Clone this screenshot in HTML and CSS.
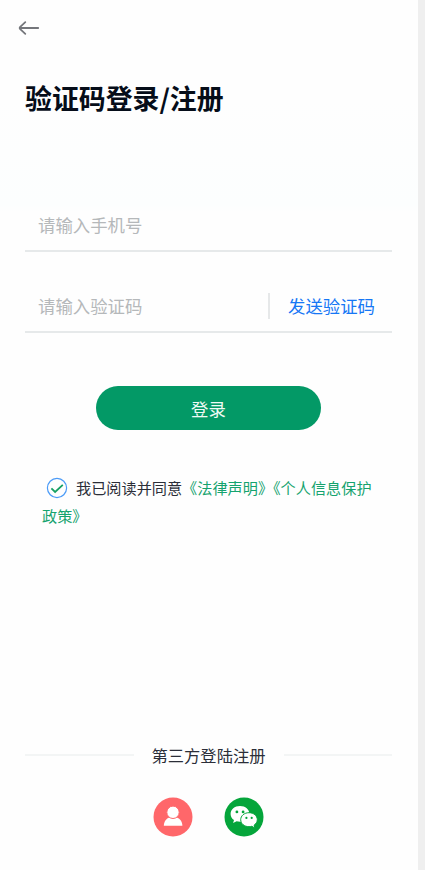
FILE: index.html
```html
<!DOCTYPE html>
<html lang="zh-CN">
<head>
<meta charset="utf-8">
<meta name="viewport" content="width=device-width, initial-scale=1">
<title>验证码登录/注册</title>
<link rel="stylesheet" href="styles.css">
</head>
<body>
<main class="page">
  <header class="topbar">
    <svg class="back" viewBox="0 0 22 16" aria-hidden="true"><path d="M20.200 8H2M7.300 2.200L2 7Q1.200 8 2 9L7.300 13.800"/></svg>
  </header>
  <h1 class="title">验证码登录/注册</h1>
  <form class="form">
    <div class="field"><span class="placeholder">请输入手机号</span></div>
    <div class="field field-code">
      <span class="placeholder">请输入验证码</span>
      <span class="send">发送验证码</span>
    </div>
    <div class="submit">登录</div>
    <div class="terms">
      <div class="terms-line"><svg class="check" viewBox="0 0 22 22" aria-hidden="true"><circle cx="11" cy="11" r="9.6"/><path d="M5.400 11.300l3.700 3.700 7.700-7.200"/></svg><span>我已阅读并同意</span><span class="link">《法律声明》《个人信息保护</span></div>
      <div class="terms-line"><span class="link">政策》</span></div>
    </div>
  </form>
  <footer class="third">
    <div class="divider">第三方登陆注册</div>
    <div class="icons">
      <svg class="icon" viewBox="0 0 40 40" aria-hidden="true">
        <circle cx="20" cy="20" r="19.5" fill="#ff676a"/>
        <path d="M10.800 28.800c.2-5 3.200-7.800 6-8.300h6.400c3 .5 6 3.300 6.200 8.300z" fill="#fff"/>
        <circle cx="20" cy="15.300" r="6.200" fill="#fff" stroke="#ff676a" stroke-width="1"/>
      </svg>
      <svg class="icon" viewBox="0 0 40 40" aria-hidden="true">
        <circle cx="20" cy="20" r="19.500" fill="#05a53b"/>
        <path d="M16 9c-5.400 0-9.400 3.500-9.400 7.900 0 2.500 1.300 4.700 3.400 6.100l-.9 3 3.500-1.800c1 .3 2.200.5 3.400.5 5.400 0 9.400-3.400 9.400-7.800S21.400 9 16 9z" fill="#fff"/>
        <path d="M25 15.700c-4.700 0-8.300 3.100-8.300 7s3.600 7 8.300 7c1 0 1.900-.1 2.800-.4l3.100 1.700-.8-2.900c1.900-1.200 3.200-3.200 3.200-5.400 0-3.900-3.600-7-8.300-7z" fill="#fff" stroke="#05a53b" stroke-width="1"/>
        <g fill="#05a53b"><circle cx="12.900" cy="14.900" r="1.400"/><circle cx="19.100" cy="14.900" r="1.400"/><circle cx="22.400" cy="20.900" r="1.100"/><circle cx="27.700" cy="20.900" r="1.100"/></g>
      </svg>
    </div>
  </footer>
</main>
</body>
</html>
```
FILE: styles.css
```css
* { box-sizing: border-box; }
html { background: #efefef; }
body {
  margin: 0;
  font-family: "Noto Sans CJK SC", sans-serif;
  color: #2b2e38;
}
.page {
  display: flex;
  flex-direction: column;
  width: 418px;
  height: 870px;
  padding: 0 26px 0 25px;
  background: linear-gradient(#fefefe 100px, #fcfefe 205px, #fefefe 212px);
  overflow: hidden;
}
.topbar { height: 56px; padding-top: 20px; margin-left: -7px; }
.back {
  display: block;
  width: 22px;
  height: 16px;
  fill: none;
  stroke: #74767b;
  stroke-width: 1.8;
  stroke-linecap: round;
}
.title {
  margin: 22px 0 0;
  font-size: 26.9px;
  line-height: 40px;
  font-weight: 700;
  color: #060d19;
  white-space: nowrap;
}
.form { margin-top: 82px; }
.field {
  display: flex;
  align-items: center;
  height: 52px;
  padding: 0 17px 0 13px;
  border-bottom: 2px solid #e6e9ea;
  font-size: 17.4px;
  line-height: 26px;
}
.field-code { margin-top: 29px; justify-content: space-between; }
.placeholder { color: #b5b8ba; }
.send { padding-left: 18px; border-left: 2px solid #e6e8e9; color: #1677f5; }
.submit {
  width: 225px;
  height: 44px;
  margin: 53px 0 0 71px;
  border-radius: 22px;
  background: #039966;
  color: #effaf5;
  font-size: 17.4px;
  line-height: 45px;
  text-align: center;
}
.terms {
  margin: 43px 0 0 17px;
  font-size: 15.17px;
  line-height: 28px;
  white-space: nowrap;
}
.terms-line { height: 28px; }
.check {
  width: 22px;
  height: 22px;
  margin: 0 8px 0 4px;
  vertical-align: -5px;
  fill: none;
}
.check circle { stroke: #4b9bf7; stroke-width: 1.2; }
.check path { stroke: #16a064; stroke-width: 1.8; }
.link { color: #15a36e; }
.third { margin-top: auto; padding-bottom: 33px; }
.divider {
  display: flex;
  align-items: center;
  gap: 18px;
  font-size: 16.3px;
  line-height: 24px;
  white-space: nowrap;
}
.divider::before, .divider::after {
  content: "";
  flex: 1;
  height: 2px;
  background: #f3f5f5;
}
.icons { display: flex; justify-content: center; gap: 31px; margin-top: 30px; }
.icon { display: block; width: 40px; height: 40px; }
```
